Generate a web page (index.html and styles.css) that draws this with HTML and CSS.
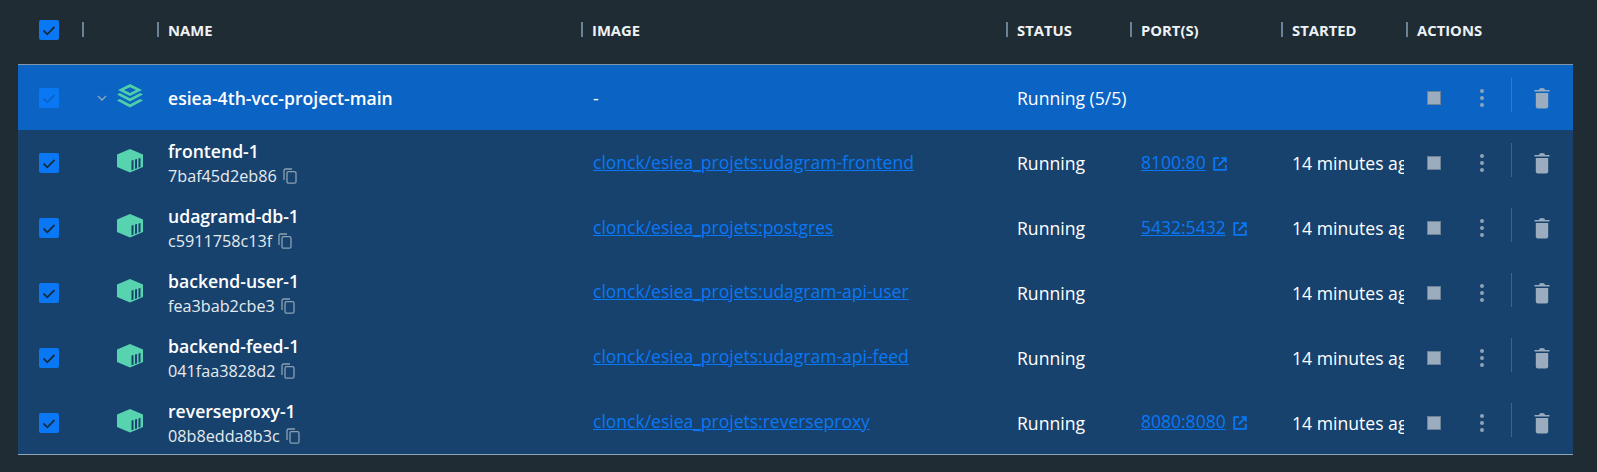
FILE: index.html
```html
<!DOCTYPE html>
<html lang="en">
<head>
    <meta charset="utf-8">
    <title>Containers</title>
    <link rel="stylesheet" href="styles.css">
</head>
<body>
    <svg class="defs" width="0" height="0">
        <symbol id="tick" viewBox="0 0 20 20"><path d="M4.500 10.500l3.800 3.800L15.500 7" fill="none" stroke="currentColor" stroke-width="1.800"/></symbol>
        <symbol id="stack" viewBox="0 0 26 24"><path d="M13 0l12 6-12 6L1 6z M13 3.200L7 6l6 2.900L19 6z" fill="#4fcfa8" fill-rule="evenodd"/><path d="M0 10.500l2.800-1.400L13 14.200l10.200-5.100 2.800 1.400L13 17.500z M0 16.500l2.800-1.400L13 20.200l10.200-5.100 2.800 1.400L13 23.500z" fill="#4fcfa8"/></symbol>
        <symbol id="box" viewBox="0 0 26 24"><path d="M13 0l13 5.500v12.500L13 23.500 0 18V5.500z" fill="#58d3b0"/><path d="M14.500 11.500l2-.5v9.500l-2 .7zM18 10.500l2-.6v9.300l-2 .7zM21.500 9.500l2-.6v9.200l-2 .7z" fill="#17426e"/></symbol>
        <symbol id="copy" viewBox="0 0 14 16"><path d="M1 12V2.500A1.500 1.500 0 0 1 2.500 1H9" fill="none" stroke="currentColor" stroke-width="1.300"/><rect x="4" y="3.700" width="9" height="11.500" rx="1.500" fill="none" stroke="currentColor" stroke-width="1.300"/></symbol>
        <symbol id="open" viewBox="0 0 14 14"><path d="M6 1.200H1.200v11.600h11.600V8M8.500 1.200h4.300v4.300M12.800 1.200L5.500 8.500" fill="none" stroke="currentColor" stroke-width="1.800"/></symbol>
        <symbol id="bin" viewBox="0 0 16 22"><path d="M0.500 3h15v1.500H.500zM5 3q0-2 3-2t3 2z" fill="currentColor"/><path d="M1.800 6h12.400v13.500a2 2 0 0 1-2 2H3.800a2 2 0 0 1-2-2z" fill="currentColor"/></symbol>
    </svg>

    <div class="table">
        <div class="row head">
            <div class="cell"><span class="check"><svg><use href="#tick"/></svg></span></div>
            <div class="cell th"></div>
            <div class="cell th">NAME</div>
            <div class="cell th">IMAGE</div>
            <div class="cell th">STATUS</div>
            <div class="cell th">PORT(S)</div>
            <div class="cell th">STARTED</div>
            <div class="cell th">ACTIONS</div>
        </div>

        <div class="body">
            <div class="row group">
                <div class="cell"><span class="check"><svg><use href="#tick"/></svg></span></div>
                <div class="cell icon-cell">
                    <svg class="chevron" viewBox="0 0 10 6"><path d="M1 1l4 4 4-4" fill="none" stroke="currentColor" stroke-width="1.300"/></svg>
                    <svg class="kind"><use href="#stack"/></svg>
                </div>
                <div class="cell"><div class="name">esiea-4th-vcc-project-main</div></div>
                <div class="cell dash">-</div>
                <div class="cell">Running (5/5)</div>
                <div class="cell"></div>
                <div class="cell"></div>
                <div class="cell actions">
                    <span class="stop"></span><span class="dots"><i></i><i></i><i></i></span><span class="sep"></span><svg class="bin"><use href="#bin"/></svg>
                </div>
            </div>

            <div class="row">
                <div class="cell"><span class="check"><svg><use href="#tick"/></svg></span></div>
                <div class="cell icon-cell"><svg class="kind"><use href="#box"/></svg></div>
                <div class="cell"><div><div class="name">frontend-1</div><div class="id">7baf45d2eb86<svg class="copy"><use href="#copy"/></svg></div></div></div>
                <div class="cell"><a class="image" href="#">clonck/esiea_projets:udagram-frontend</a></div>
                <div class="cell">Running</div>
                <div class="cell"><a href="#">8100:80</a><svg class="open"><use href="#open"/></svg></div>
                <div class="cell started"><span>14 minutes ago</span></div>
                <div class="cell actions">
                    <span class="stop"></span><span class="dots"><i></i><i></i><i></i></span><span class="sep"></span><svg class="bin"><use href="#bin"/></svg>
                </div>
            </div>

            <div class="row">
                <div class="cell"><span class="check"><svg><use href="#tick"/></svg></span></div>
                <div class="cell icon-cell"><svg class="kind"><use href="#box"/></svg></div>
                <div class="cell"><div><div class="name">udagramd-db-1</div><div class="id">c5911758c13f<svg class="copy"><use href="#copy"/></svg></div></div></div>
                <div class="cell"><a class="image" href="#">clonck/esiea_projets:postgres</a></div>
                <div class="cell">Running</div>
                <div class="cell"><a href="#">5432:5432</a><svg class="open"><use href="#open"/></svg></div>
                <div class="cell started"><span>14 minutes ago</span></div>
                <div class="cell actions">
                    <span class="stop"></span><span class="dots"><i></i><i></i><i></i></span><span class="sep"></span><svg class="bin"><use href="#bin"/></svg>
                </div>
            </div>

            <div class="row">
                <div class="cell"><span class="check"><svg><use href="#tick"/></svg></span></div>
                <div class="cell icon-cell"><svg class="kind"><use href="#box"/></svg></div>
                <div class="cell"><div><div class="name">backend-user-1</div><div class="id">fea3bab2cbe3<svg class="copy"><use href="#copy"/></svg></div></div></div>
                <div class="cell"><a class="image" href="#">clonck/esiea_projets:udagram-api-user</a></div>
                <div class="cell">Running</div>
                <div class="cell"></div>
                <div class="cell started"><span>14 minutes ago</span></div>
                <div class="cell actions">
                    <span class="stop"></span><span class="dots"><i></i><i></i><i></i></span><span class="sep"></span><svg class="bin"><use href="#bin"/></svg>
                </div>
            </div>

            <div class="row">
                <div class="cell"><span class="check"><svg><use href="#tick"/></svg></span></div>
                <div class="cell icon-cell"><svg class="kind"><use href="#box"/></svg></div>
                <div class="cell"><div><div class="name">backend-feed-1</div><div class="id">041faa3828d2<svg class="copy"><use href="#copy"/></svg></div></div></div>
                <div class="cell"><a class="image" href="#">clonck/esiea_projets:udagram-api-feed</a></div>
                <div class="cell">Running</div>
                <div class="cell"></div>
                <div class="cell started"><span>14 minutes ago</span></div>
                <div class="cell actions">
                    <span class="stop"></span><span class="dots"><i></i><i></i><i></i></span><span class="sep"></span><svg class="bin"><use href="#bin"/></svg>
                </div>
            </div>

            <div class="row">
                <div class="cell"><span class="check"><svg><use href="#tick"/></svg></span></div>
                <div class="cell icon-cell"><svg class="kind"><use href="#box"/></svg></div>
                <div class="cell"><div><div class="name">reverseproxy-1</div><div class="id">08b8edda8b3c<svg class="copy"><use href="#copy"/></svg></div></div></div>
                <div class="cell"><a class="image" href="#">clonck/esiea_projets:reverseproxy</a></div>
                <div class="cell">Running</div>
                <div class="cell"><a href="#">8080:8080</a><svg class="open"><use href="#open"/></svg></div>
                <div class="cell started"><span>14 minutes ago</span></div>
                <div class="cell actions">
                    <span class="stop"></span><span class="dots"><i></i><i></i><i></i></span><span class="sep"></span><svg class="bin"><use href="#bin"/></svg>
                </div>
            </div>
        </div>
    </div>
</body>
</html>
```

FILE: styles.css
```css
* {
    margin: 0;
    padding: 0;
    box-sizing: border-box;
}

body {
    background: #202c33;
    color: #fff;
    font-family: "Open Sans", sans-serif;
    font-size: 17.6px;
    height: 472px;
    overflow: hidden;
}

.defs {
    position: absolute;
}

.table {
    margin-left: 18px;
    width: 1555px;
}

/* Same columns for the header and every row */
.row {
    display: grid;
    grid-template-columns: 64px 75px 424px 425px 124px 151px 125px 167px;
    height: 64.83px;
    background: #17426e;
}

.head {
    height: 64px;
    padding-bottom: 4px;
    background: none;
}

.body {
    border-top: 1px solid #7f96a8;
    border-bottom: 1px solid #8ea4b8;
}

.group {
    background: #0b63c4;
}

.cell {
    display: flex;
    align-items: center;
    padding-left: 11px;
    padding-top: 2px;
    min-width: 0;
}

.cell:first-child {
    padding-left: 21px;
}

.head .cell {
    padding-top: 0;
}

.th {
    font-size: 14.8px;
    font-weight: 700;
    color: #eef2f5;
    border-image: linear-gradient(to bottom, transparent 22px, #6c8299 22px, #6c8299 37px, transparent 37px) 1;
    border-left: 2px solid;
    padding-left: 9px;
}

.check {
    width: 20px;
    height: 20px;
    border-radius: 2px;
    background: #0a78f5;
    color: #132c42;
    display: block;
}

.check svg {
    display: block;
    width: 20px;
    height: 20px;
}

.group .check {
    color: #0b63c4;
}

.icon-cell {
    position: relative;
    padding-left: 35px;
}

.chevron {
    position: absolute;
    left: 15px;
    top: 30px;
    width: 10px;
    height: 6px;
    color: #8fa6bb;
}

.kind {
    width: 26px;
    height: 24px;
    margin-top: -4px;
}

.name {
    font-weight: 600;
    line-height: 24px;
}

.id {
    display: flex;
    align-items: center;
    font-size: 16.2px;
    line-height: 22px;
    color: #e6ebef;
    margin-top: 2px;
}

.copy {
    width: 14px;
    height: 16px;
    margin-left: 6px;
    color: #8ba0b3;
}

a {
    color: #0a78f5;
    font-size: 17.5px;
    margin-top: -3px;
}

.image,
.dash {
    margin-left: 1px;
}

.open {
    width: 14px;
    height: 14px;
    margin-left: 7px;
    margin-top: 1px;
    color: #0a78f5;
}

.started {
    padding-right: 2px;
}

.started span {
    overflow: hidden;
    white-space: nowrap;
}

.actions {
    padding-left: 21px;
}

.stop {
    width: 14px;
    height: 14px;
    background: #9aacbd;
    border: 1px solid #6c8299;
}

.dots {
    display: flex;
    flex-direction: column;
    gap: 3px;
    margin-left: 39px;
}

.dots i {
    width: 4px;
    height: 4px;
    border-radius: 50%;
    background: #8ea3b7;
}

.sep {
    width: 1px;
    height: 34px;
    margin-left: 27px;
    margin-top: -6px;
    background: rgba(140, 165, 190, 0.35);
}

.bin {
    width: 16px;
    height: 22px;
    margin-left: 22px;
    color: #9aacbd;
}
```
